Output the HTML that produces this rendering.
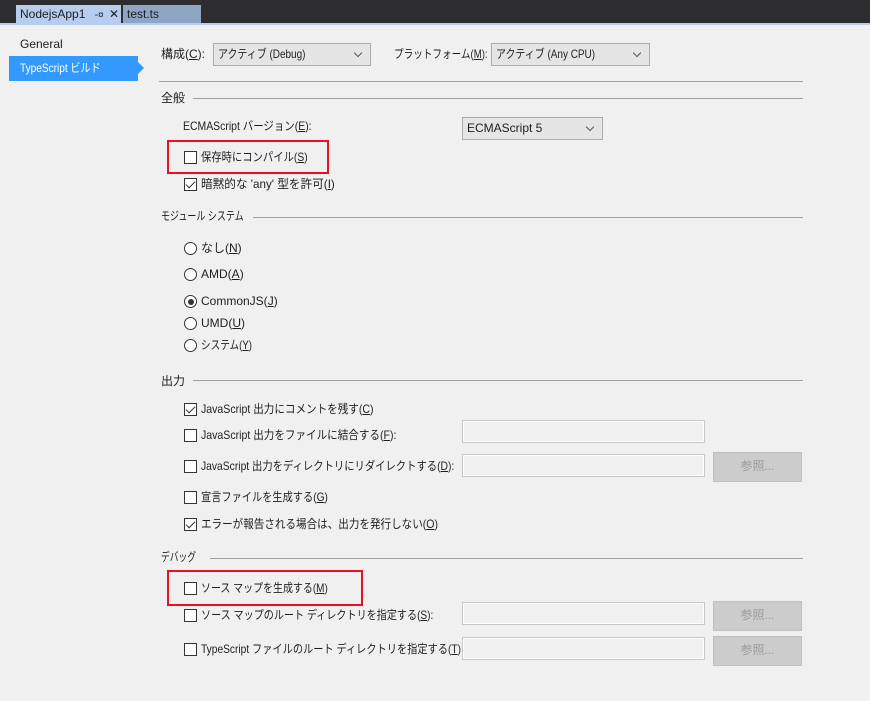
<!DOCTYPE html><html><head><meta charset="utf-8"><style>
*{margin:0;padding:0;box-sizing:border-box}
body{width:870px;height:701px;background:#f0f0f0;position:relative;overflow:hidden;font-family:"Liberation Sans","Noto Sans CJK JP",sans-serif;font-size:12px;color:#1e1e1e}
.a{position:absolute;white-space:nowrap}
.t{position:absolute;white-space:nowrap;line-height:16px;height:16px;transform-origin:0 50%}
.cb{position:absolute;width:13px;height:13px;border:1px solid #333;background:#fff}
.cb.k::after{content:"";position:absolute;left:3px;top:0px;width:4px;height:8px;border:solid #333;border-width:0 1.5px 1.5px 0;transform:rotate(45deg)}
.rd{position:absolute;width:13px;height:13px;border:1px solid #333;border-radius:50%;background:#fff}
.rd.k::after{content:"";position:absolute;left:2.5px;top:2.5px;width:6px;height:6px;border-radius:50%;background:#333}
.hl{position:absolute;height:1px;background:#a0a0a0}
.cmb{position:absolute;border:1px solid #acacac;background:#e5e5e5}
.cmb span{position:absolute;left:4px;top:2px;line-height:16px;white-space:nowrap;transform-origin:0 50%}
.cmb::after{content:"";position:absolute;right:9px;top:6px;width:5px;height:5px;border:solid #555;border-width:0 1px 1px 0;transform:rotate(45deg)}
.tb{position:absolute;border:1px solid #c8c8c8;box-shadow:inset 0 0 0 1px #fff;background:#f0f0f0}
.bt{position:absolute;background:#ccc;border:1px solid #bfbfbf;color:#9a9a9a;text-align:center;line-height:27px}
.red{position:absolute;border:2px solid #e81123}
u{text-decoration:underline}
</style></head><body>
<div class="a" style="left:0;top:0;width:870px;height:25px;background:#2d2d30"></div>
<div class="a" style="left:0;top:23px;width:870px;height:2px;background:#b7cdee"></div>
<div class="a" style="left:16px;top:5px;width:105px;height:20px;background:#b7cdee;color:#1e1e1e;padding:2px 0 0 4px">NodejsApp1 <span style="font-size:10px;margin-left:6px">-¤</span> <span style="margin-left:2px">✕</span></div>
<div class="a" style="left:123px;top:5px;width:78px;height:18px;background:#8fa5c4;color:#1e1e1e;padding:2px 0 0 4px">test.ts</div>

<div class="t" style="left:20px;top:36px">General</div>
<div class="a" style="left:9px;top:56px;width:129px;height:25px;background:#3399ff"></div>
<div class="t" style="left:20px;top:60px;color:#fff;transform:scaleX(.84)">TypeScript ビルド</div>
<div class="a" style="left:138px;top:62px;width:0;height:0;border-top:6px solid transparent;border-bottom:6px solid transparent;border-left:6px solid #3399ff"></div>

<div class="t" style="left:161px;top:46px">構成(<u>C</u>):</div>
<div class="cmb" style="left:213px;top:43px;width:158px;height:23px"><span style="transform:scaleX(.83)">アクティブ (Debug)</span></div>
<div class="t" style="left:394px;top:46px;transform:scaleX(.8)">プラットフォーム(<u>M</u>):</div>
<div class="cmb" style="left:491px;top:43px;width:159px;height:23px"><span style="transform:scaleX(.83)">アクティブ (Any CPU)</span></div>
<div class="hl" style="left:159px;top:81px;width:644px"></div>

<div class="t" style="left:161px;top:90px">全般</div><div class="hl" style="left:193px;top:98px;width:610px"></div>
<div class="t" style="left:183px;top:118px;transform:scaleX(.87)">ECMAScript バージョン(<u>E</u>):</div>
<div class="cmb" style="left:462px;top:117px;width:141px;height:23px"><span>ECMAScript 5</span></div>
<div class="red" style="left:167px;top:140px;width:162px;height:34px"></div>
<div class="cb" style="left:184px;top:151px"></div><div class="t" style="left:201px;top:149px;transform:scaleX(.86)">保存時にコンパイル(<u>S</u>)</div>
<div class="cb k" style="left:184px;top:178px"></div><div class="t" style="left:201px;top:176px;transform:scaleX(.97)">暗黙的な 'any' 型を許可(<u>I</u>)</div>

<div class="t" style="left:161px;top:208px;transform:scaleX(.75)">モジュール システム</div><div class="hl" style="left:253px;top:217px;width:550px"></div>
<div class="rd" style="left:184px;top:242px"></div><div class="t" style="left:201px;top:240px">なし(<u>N</u>)</div>
<div class="rd" style="left:184px;top:268px"></div><div class="t" style="left:201px;top:266px">AMD(<u>A</u>)</div>
<div class="rd k" style="left:184px;top:295px"></div><div class="t" style="left:201px;top:293px">CommonJS(<u>J</u>)</div>
<div class="rd" style="left:184px;top:317px"></div><div class="t" style="left:201px;top:315px">UMD(<u>U</u>)</div>
<div class="rd" style="left:184px;top:339px"></div><div class="t" style="left:201px;top:337px;transform:scaleX(.8)">システム(<u>Y</u>)</div>

<div class="t" style="left:161px;top:373px">出力</div><div class="hl" style="left:193px;top:380px;width:610px"></div>
<div class="cb k" style="left:184px;top:403px"></div><div class="t" style="left:201px;top:401px;transform:scaleX(.88)">JavaScript 出力にコメントを残す(<u>C</u>)</div>
<div class="cb" style="left:184px;top:429px"></div><div class="t" style="left:201px;top:427px;transform:scaleX(.88)">JavaScript 出力をファイルに結合する(<u>F</u>):</div>
<div class="tb" style="left:462px;top:420px;width:243px;height:23px"></div>
<div class="cb" style="left:184px;top:460px"></div><div class="t" style="left:201px;top:458px;transform:scaleX(.86)">JavaScript 出力をディレクトリにリダイレクトする(<u>D</u>):</div>
<div class="tb" style="left:462px;top:454px;width:243px;height:23px"></div>
<div class="bt" style="left:713px;top:452px;width:89px;height:30px">参照...</div>
<div class="cb" style="left:184px;top:491px"></div><div class="t" style="left:201px;top:489px;transform:scaleX(.85)">宣言ファイルを生成する(<u>G</u>)</div>
<div class="cb k" style="left:184px;top:518px"></div><div class="t" style="left:201px;top:516px;transform:scaleX(.88)">エラーが報告される場合は、出力を発行しない(<u>O</u>)</div>

<div class="t" style="left:161px;top:549px;transform:scaleX(.73)">デバッグ</div><div class="hl" style="left:210px;top:558px;width:593px"></div>
<div class="red" style="left:167px;top:570px;width:196px;height:36px"></div>
<div class="cb" style="left:184px;top:582px"></div><div class="t" style="left:201px;top:580px;transform:scaleX(.83)">ソース マップを生成する(<u>M</u>)</div>
<div class="cb" style="left:184px;top:609px"></div><div class="t" style="left:201px;top:607px;transform:scaleX(.84)">ソース マップのルート ディレクトリを指定する(<u>S</u>):</div>
<div class="tb" style="left:462px;top:602px;width:243px;height:23px"></div>
<div class="bt" style="left:713px;top:601px;width:89px;height:30px">参照...</div>
<div class="cb" style="left:184px;top:643px"></div><div class="t" style="left:201px;top:641px;transform:scaleX(.85)">TypeScript ファイルのルート ディレクトリを指定する(<u>T</u>):</div>
<div class="tb" style="left:462px;top:637px;width:243px;height:23px"></div>
<div class="bt" style="left:713px;top:636px;width:89px;height:30px">参照...</div>
</body></html>
